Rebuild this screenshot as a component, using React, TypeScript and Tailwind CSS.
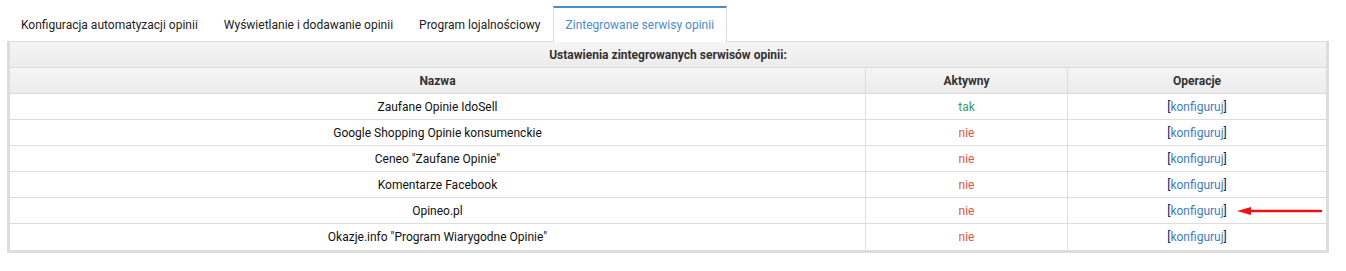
import React from "react";

const rows: { name: string; active: boolean; arrow?: boolean }[] = [
  { name: "Zaufane Opinie IdoSell", active: true },
  { name: "Google Shopping Opinie konsumenckie", active: false },
  { name: 'Ceneo "Zaufane Opinie"', active: false },
  { name: "Komentarze Facebook", active: false },
  { name: "Opineo.pl", active: false, arrow: true },
  { name: 'Okazje.info "Program Wiarygodne Opinie"', active: false },
];

const tabs = [
  "Konfiguracja automatyzacji opinii",
  "Wyświetlanie i dodawanie opinii",
  "Program lojalnościowy",
  "Zintegrowane serwisy opinii",
];

export default function App() {
  return (
    <div
      className="w-[1346px] h-[271px] bg-white pl-[7px] pt-[6px]"
      style={{ fontFamily: "Roboto, 'Liberation Sans', sans-serif" }}
    >
      <div className="flex h-[35px] items-stretch pl-[1px]">
        {tabs.map((t, i) =>
          i === 3 ? (
            <div
              key={t}
              className="flex items-center px-[12px] ml-[-1px] border-t-2 border-t-[#4a8cc6] border-x border-x-[#dcdcdc] bg-white text-[12px] text-[#4a8cd0] mb-[-1px] relative z-10"
            >
              {t}
            </div>
          ) : (
            <div
              key={t}
              className="flex items-center px-[13px] pt-[2px] text-[12px] text-[#222]"
            >
              {t}
            </div>
          )
        )}
      </div>
      <div className="w-[1322px] border-t border-t-[#dddddd] border-x-[3px] border-b-[3px] border-x-[#dddddd] border-b-[#dddddd]">
        <div className="h-[26px] flex items-center justify-center bg-gradient-to-b from-[#f5f5f5] to-[#ececec] border-b border-[#dddddd] text-[12px] font-bold text-[#333]">
          Ustawienia zintegrowanych serwisów opinii:
        </div>
        <div className="h-[26px] flex bg-gradient-to-b from-[#f5f5f5] to-[#ececec] border-b border-[#dddddd] text-[12px] font-bold text-[#333]">
          <div className="w-[856px] flex items-center justify-center border-r border-[#dddddd]">
            Nazwa
          </div>
          <div className="w-[202px] flex items-center justify-center border-r border-[#dddddd]">
            Aktywny
          </div>
          <div className="flex-1 flex items-center justify-center">Operacje</div>
        </div>
        {rows.map((r, i) => (
          <div
            key={r.name}
            className={`h-[26px] flex text-[12px] ${i < rows.length - 1 ? "border-b border-[#dddddd]" : ""}`}
          >
            <div className="w-[856px] flex items-center justify-center border-r border-[#dddddd] text-[#111]">
              {r.name}
            </div>
            <div
              className={`w-[202px] flex items-center justify-center border-r border-[#dddddd] ${r.active ? "text-[#3c9a64]" : "text-[#e0553f]"}`}
            >
              {r.active ? "tak" : "nie"}
            </div>
            <div className="flex-1 flex items-center justify-center relative">
              <span className="text-[#0b1a66]">[</span>
              <span className="text-[#3b7dc4]">konfiguruj</span>
              <span className="text-[#0b1a66]">]</span>
              {r.arrow && (
                <svg
                  className="absolute left-[169px] top-[8px]"
                  width="86"
                  height="10"
                  viewBox="0 0 86 10"
                >
                  <line x1="12" y1="5" x2="84" y2="5" stroke="#ee1111" strokeWidth="2.5" strokeLinecap="round" />
                  <polygon points="0,5 14,1 14,9" fill="#ee1111" />
                </svg>
              )}
            </div>
          </div>
        ))}
      </div>
    </div>
  );
}
